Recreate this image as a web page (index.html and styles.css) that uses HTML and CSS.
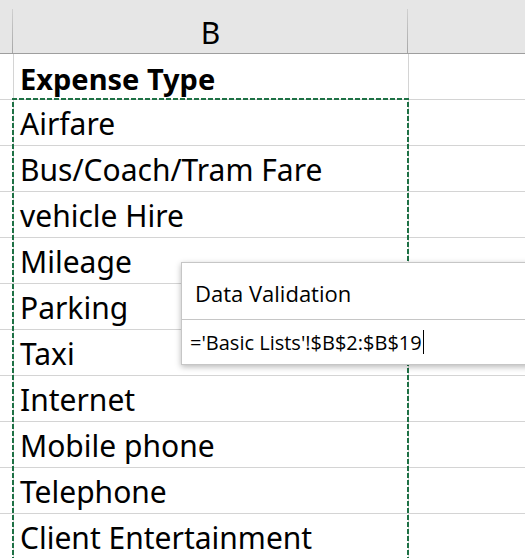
FILE: index.html
```html
<!DOCTYPE html>
<html lang="en">
<head>
  <meta charset="UTF-8" />
  <title>Expense Type list</title>
  <link rel="stylesheet" href="styles.css">
</head>
<body>

  <div class="sheet">
    <!-- column headers -->
    <div class="head-row">
      <div class="col-a"></div>
      <div class="col-b head-cell">B</div>
      <div class="col-c"></div>
    </div>

    <div class="row">
      <div class="col-a"></div>
      <div class="col-b cell bold">Expense Type</div>
      <div class="col-c"></div>
    </div>
    <div class="row"><div class="col-a"></div><div class="col-b cell">Airfare</div><div class="col-c"></div></div>
    <div class="row"><div class="col-a"></div><div class="col-b cell">Bus/Coach/Tram Fare</div><div class="col-c"></div></div>
    <div class="row"><div class="col-a"></div><div class="col-b cell">vehicle Hire</div><div class="col-c"></div></div>
    <div class="row"><div class="col-a"></div><div class="col-b cell">Mileage</div><div class="col-c"></div></div>
    <div class="row"><div class="col-a"></div><div class="col-b cell">Parking</div><div class="col-c"></div></div>
    <div class="row"><div class="col-a"></div><div class="col-b cell">Taxi</div><div class="col-c"></div></div>
    <div class="row"><div class="col-a"></div><div class="col-b cell">Internet</div><div class="col-c"></div></div>
    <div class="row"><div class="col-a"></div><div class="col-b cell">Mobile phone</div><div class="col-c"></div></div>
    <div class="row"><div class="col-a"></div><div class="col-b cell">Telephone</div><div class="col-c"></div></div>
    <div class="row"><div class="col-a"></div><div class="col-b cell">Client Entertainment</div><div class="col-c"></div></div>

    <!-- copy marquee around B2:B19 -->
    <svg class="marquee" width="400" height="470" viewBox="0 0 400 470">
      <path d="M1 471 L1 1 L396 1 L396 471" fill="none" stroke="#1e7145" stroke-width="2" stroke-dasharray="5 2"/>
    </svg>

    <!-- data validation source popup -->
    <div class="dv-popup">
      <div class="dv-title">Data Validation</div>
      <div class="dv-input">='Basic Lists'!$B$2:$B$19<span class="caret"></span></div>
    </div>
  </div>

</body>
</html>
```

FILE: styles.css
```css
body {
  margin: 0;
  background: #fff;
  overflow: hidden;
}

.sheet {
  position: relative;
  width: 525px;
  height: 558px;
  overflow: hidden;
  font-family: "Noto Sans", "Open Sans", sans-serif;
  color: #000;
}

.head-row,
.row {
  display: flex;
}

.head-row {
  height: 53px;
  background: #e6e6e6;
  border-bottom: 1px solid #9e9e9e;
}

.row {
  height: 45px;
  border-bottom: 1px solid #d4d4d4;
}

.col-a {
  width: 13px;
  flex: none;
  border-right: 1px solid #d4d4d4;
}

.col-b {
  width: 395px;
  flex: none;
  border-right: 1px solid #d4d4d4;
}

.col-c {
  flex: 1;
}

.head-row .col-a,
.head-row .col-b {
  border-right: none;
  background: linear-gradient(#d0d0d0, #9e9e9e) right 9px / 1px 100% no-repeat;
}

.head-cell {
  display: flex;
  align-items: center;
  justify-content: center;
  padding-top: 13px;
  box-sizing: border-box;
  font-size: 30px;
  line-height: 1;
}

.cell {
  display: flex;
  align-items: flex-end;
  padding: 0 0 6px 6px;
  box-sizing: border-box;
  font-size: 30px;
  line-height: 1;
  white-space: nowrap;
}

.bold {
  font-weight: bold;
  font-size: 29px;
}

.marquee {
  position: absolute;
  left: 12px;
  top: 98px;
}

.dv-popup {
  position: absolute;
  left: 181px;
  top: 262px;
  width: 360px;
  background: #fff;
  border: 1px solid #c6c6c6;
  box-shadow: 0 2px 6px rgba(0,0,0,0.28);
  font-family: "Open Sans", "Noto Sans", sans-serif;
}

.dv-title {
  height: 57px;
  padding: 3px 0 0 13px;
  box-sizing: border-box;
  display: flex;
  align-items: center;
  font-size: 22px;
  border-bottom: 1px solid #c6c6c6;
}

.dv-input {
  height: 44px;
  padding-left: 8px;
  display: flex;
  align-items: center;
  font-size: 20px;
}

.caret {
  display: inline-block;
  width: 1px;
  height: 24px;
  background: #000;
  margin-left: 1px;
}
```
